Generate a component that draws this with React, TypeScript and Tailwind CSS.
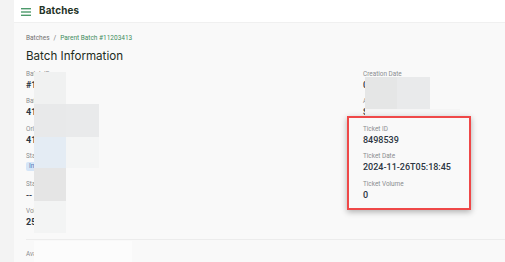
import React from "react";

const Field = ({ label, children, bold }: { label: string; children: React.ReactNode; bold?: boolean }) => (
  <div className="flex flex-col h-[27.5px]">
    <div className="mt-[1.5px] text-[6.4px] leading-[9px] text-[#8a8d90] whitespace-nowrap">{label}</div>
    <div className={"text-[9px] leading-[12px] text-[#2b3542] whitespace-nowrap " + (bold ? "font-bold text-[9.5px]" : "font-medium")}>{children}</div>
  </div>
);

export default function App() {
  return (
    <div className="relative flex w-[505px] h-[262px] overflow-hidden bg-[#f3f3f3]" style={{ fontFamily: "Roboto, 'Liberation Sans', sans-serif" }}>
      <div className="w-[14px] shrink-0" />
      <div className="flex-1 flex flex-col bg-[#f9f9f9]">
        <header className="h-[23px] bg-white border-b border-[#f0f0f0] flex items-center pl-[7px] gap-[8px]">
          <svg width="10" height="8" viewBox="0 0 10 8" className="mt-[1px]">
            <rect x="0" y="0" width="10" height="1.4" fill="#4d9a6b" />
            <rect x="0" y="3.3" width="10" height="1.4" fill="#4d9a6b" />
            <rect x="0" y="6.6" width="10" height="1.4" fill="#4d9a6b" />
          </svg>
          <span className="text-[9.8px] font-bold text-[#1f3326] tracking-[0.2px]" style={{ fontFamily: "Inter, sans-serif" }}>Batches</span>
        </header>
        <div className="pl-[12px] pt-[11px] flex flex-col">
          <div className="flex items-center gap-[4px] text-[6.5px] leading-[9px]">
            <span className="text-[#707070]">Batches</span>
            <span className="text-[#707070]">/</span>
            <span className="text-[#3f8d5e]">Parent Batch #11203413</span>
          </div>
          <h1 className="mt-[5px] text-[11.6px] leading-[16px] text-[#1d2c22]" style={{ fontFamily: "Inter, sans-serif" }}>Batch Information</h1>
          <div className="mt-[4px] grid grid-cols-[337px_1fr]">
            <div className="flex flex-col">
              <Field label="Batch ID" bold>#11</Field>
              <Field label="Batch Size" bold>41</Field>
              <Field label="Original Volume" bold>41</Field>
              <div className="flex flex-col h-[27.5px]">
                <div className="mt-[1.5px] text-[6.4px] leading-[9px] text-[#8a8d90]">Status</div>
                <div className="mt-[1px] self-start rounded-[2px] bg-[#d5e5f7] px-[3px] text-[6.5px] leading-[9px] text-[#4b7ab5]">Initiated</div>
              </div>
              <Field label="Stage">--</Field>
              <Field label="Volume" bold>25</Field>
            </div>
            <div className="flex flex-col">
              <Field label="Creation Date">0</Field>
              <Field label="Action">S</Field>
              <Field label="Ticket ID">8498539</Field>
              <Field label="Ticket Date">2024-11-26T05:18:45</Field>
              <Field label="Ticket Volume">0</Field>
            </div>
          </div>
          <div className="mt-[6px] h-px bg-[#ececec]" />
          <div className="mt-[10px] text-[6.4px] leading-[9px] text-[#8a8d90]">Available</div>
        </div>
      </div>

      {/* privacy masks */}
      <div className="absolute left-[34px] top-[72px] w-[32px] h-[32px] bg-[#f0f1f1]" />
      <div className="absolute left-[34px] top-[104px] w-[32px] h-[33px] bg-[#e8e9ea]" />
      <div className="absolute left-[66px] top-[104px] w-[33px] h-[33px] bg-[#e9eaeb]" />
      <div className="absolute left-[34px] top-[137px] w-[32px] h-[31px] bg-[#e4ecf4]" />
      <div className="absolute left-[66px] top-[137px] w-[33px] h-[31px] bg-[#f4f5f5]" />
      <div className="absolute left-[34px] top-[168px] w-[32px] h-[33px] bg-[#e5e5e5]" />
      <div className="absolute left-[34px] top-[201px] w-[32px] h-[32px] bg-[#f3f4f4]" />
      <div className="absolute left-[34px] top-[241px] w-[98px] h-[21px] bg-[#fcfcfc]" />
      <div className="absolute left-[365px] top-[77px] w-[32px] h-[32px] bg-[#e5e6e6]" />
      <div className="absolute left-[397px] top-[77px] w-[33px] h-[32px] bg-[#e9eaeb]" />
      <div className="absolute left-[365px] top-[109px] w-[95px] h-[8px] bg-[#f5f5f5]" />

      {/* annotation box */}
      <div className="absolute left-[347px] top-[116px] w-[124px] h-[94px] border-[2.5px] border-[#ef4848] shadow-[0_2px_6px_rgba(0,0,0,0.3)]" />
    </div>
  );
}
